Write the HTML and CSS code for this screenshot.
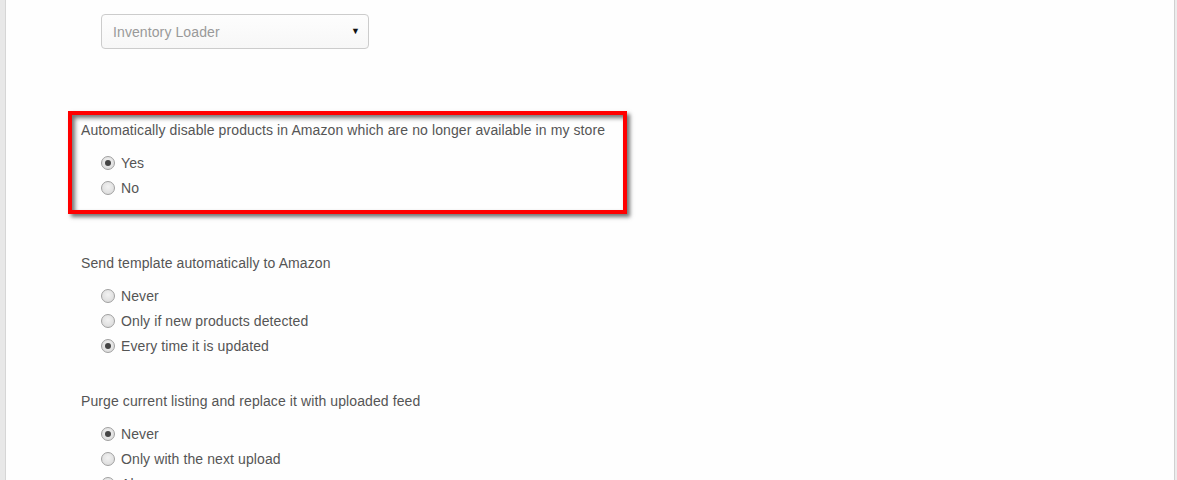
FILE: index.html
```html
<!DOCTYPE html>
<html>
<head>
<meta charset="utf-8">
<link rel="stylesheet" href="styles.css">
</head>
<body>
<div class="page">
  <div class="strip-left"></div>
  <main class="content">
    <div class="select-row">
      <div class="select">
        <span class="select-text">Inventory Loader</span>
        <span class="caret">&#9660;</span>
      </div>
    </div>

    <section class="group highlight">
      <div class="group-label">Automatically disable products in Amazon which are no longer available in my store</div>
      <div class="options">
        <div class="option"><span class="radio checked"></span><span>Yes</span></div>
        <div class="option"><span class="radio"></span><span>No</span></div>
      </div>
    </section>

    <section class="group after-highlight">
      <div class="group-label">Send template automatically to Amazon</div>
      <div class="options">
        <div class="option"><span class="radio"></span><span>Never</span></div>
        <div class="option"><span class="radio"></span><span>Only if new products detected</span></div>
        <div class="option"><span class="radio checked"></span><span>Every time it is updated</span></div>
      </div>
    </section>

    <section class="group">
      <div class="group-label">Purge current listing and replace it with uploaded feed</div>
      <div class="options">
        <div class="option"><span class="radio checked"></span><span>Never</span></div>
        <div class="option"><span class="radio"></span><span>Only with the next upload</span></div>
        <div class="option"><span class="radio"></span><span>Always</span></div>
      </div>
    </section>
  </main>
  <div class="strip-right"></div>
</div>
</body>
</html>
```

FILE: styles.css
```css
* { box-sizing: border-box; }

html, body {
  margin: 0;
  padding: 0;
  height: 100%;
  overflow: hidden;
}

body {
  font-family: "Liberation Sans", Arial, Helvetica, sans-serif;
  font-size: 14px;
  letter-spacing: 0.1px;
  color: #555555;
  background: #fefefe;
}

.page {
  display: flex;
  min-height: 100%;
}

.strip-left {
  width: 6px;
  flex: none;
  background: #e8e8e8;
  border-right: 1px solid #d6d6d6;
}

.strip-right {
  width: 3px;
  flex: none;
  background: #ececec;
  border-left: 1px solid #d0d0d0;
}

.content {
  flex: 1;
  padding-left: 75px;
  padding-top: 14px;
}

.select-row {
  padding-left: 20px;
}

.select {
  width: 268px;
  height: 35px;
  border: 1px solid #cccccc;
  border-radius: 4px;
  background: linear-gradient(#fdfdfd, #f7f7f7);
  display: flex;
  align-items: center;
  justify-content: space-between;
  padding: 0 8px 0 11px;
}

.select-text {
  color: #999999;
  font-size: 14px;
}

.caret {
  color: #111111;
  font-size: 9px;
  line-height: 1;
}

.group-label {
  line-height: 20px;
  margin-bottom: 10px;
}

.options {
  padding-left: 20px;
}

.option {
  height: 25px;
  display: flex;
  align-items: center;
  gap: 6px;
  line-height: 20px;
}

.radio {
  width: 14px;
  height: 14px;
  flex: none;
  border-radius: 50%;
  border: 1px solid #a0a0a0;
  background: radial-gradient(circle at 50% 40%, #f2f2f2 0%, #e0e0e0 65%, #d4d4d4 100%);
  display: flex;
  align-items: center;
  justify-content: center;
}

.radio.checked::after {
  content: "";
  width: 6px;
  height: 6px;
  border-radius: 50%;
  background: #444444;
}

.group {
  margin-top: 33px;
}

.highlight {
  margin-top: 62px;
  margin-left: -13px;
  width: 559px;
  border: 4px solid #ff0000;
  padding: 5px 9px 10px 9px;
  box-shadow: 3px 3px 4px rgba(0, 0, 0, 0.55), inset 3px 3px 4px rgba(0, 0, 0, 0.55);
}

.after-highlight {
  margin-top: 39px;
}
```
